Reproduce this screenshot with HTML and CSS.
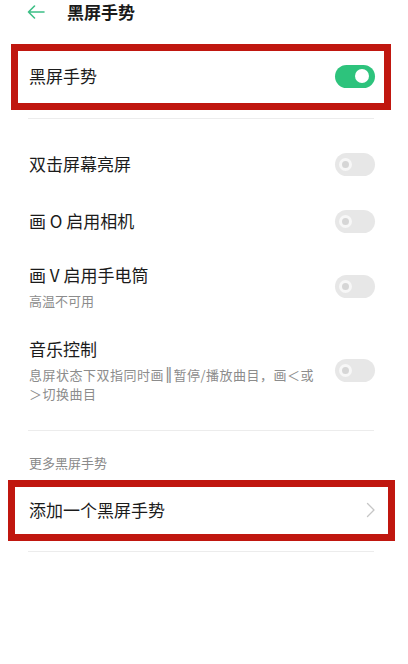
FILE: index.html
```html
<!DOCTYPE html>
<html lang="zh-CN">
<head>
<meta charset="utf-8">
<link rel="stylesheet" href="styles.css">
</head>
<body>
<div class="page">
  <header class="topbar">
    <svg class="back" width="18" height="14" viewBox="0 0 18 14">
      <path d="M17 7H1.5M7.5 1L1.5 7l6 6" fill="none" stroke="#3dbf86" stroke-width="1.6" stroke-linecap="round" stroke-linejoin="round"/>
    </svg>
    <h1 class="title">黑屏手势</h1>
  </header>

  <div class="hl hl-main">
    <div class="main-row">
      <span class="row-title">黑屏手势</span>
      <span class="toggle on"><span class="knob"></span></span>
    </div>
  </div>
  <div class="divider first"></div>

  <div class="rows">
    <div class="row">
      <div class="text"><div class="row-title">双击屏幕亮屏</div></div>
      <span class="toggle off"><span class="knob"></span></span>
    </div>
    <div class="row">
      <div class="text"><div class="row-title">画 O 启用相机</div></div>
      <span class="toggle off"><span class="knob"></span></span>
    </div>
    <div class="row">
      <div class="text">
        <div class="row-title">画 V 启用手电筒</div>
        <div class="row-sub">高温不可用</div>
      </div>
      <span class="toggle off"><span class="knob"></span></span>
    </div>
    <div class="row">
      <div class="text">
        <div class="row-title">音乐控制</div>
        <div class="row-sub wide">息屏状态下双指同时画<span class="bars">‖</span>暂停/播放曲目，画＜或＞切换曲目</div>
      </div>
      <span class="toggle off"><span class="knob"></span></span>
    </div>
  </div>
  <div class="divider"></div>

  <div class="section-head">更多黑屏手势</div>
  <div class="hl hl-add">
    <div class="add-row">
      <span class="row-title">添加一个黑屏手势</span>
      <svg class="chev" width="10" height="16" viewBox="0 0 10 16">
        <path d="M1.5 1.5L8 8l-6.5 6.5" fill="none" stroke="#c6c6c6" stroke-width="1.3" stroke-linecap="round" stroke-linejoin="round"/>
      </svg>
    </div>
  </div>
  <div class="divider last"></div>
</div>
</body>
</html>
```

FILE: styles.css
```css
html, body {
  margin: 0;
  padding: 0;
  background: #ffffff;
}
body {
  font-family: "Noto Sans CJK SC", "Noto Sans", sans-serif;
  color: #1b1b1b;
  width: 408px;
  height: 664px;
  overflow: hidden;
}
.page {
  display: flex;
  flex-direction: column;
}
.topbar {
  height: 24px;
  display: flex;
  align-items: center;
  padding-left: 27px;
}
.back {
  display: block;
  margin-top: -1px;
}
.title {
  margin: -1px 0 0 22px;
  font-size: 17px;
  font-weight: 700;
  line-height: 24px;
  color: #1a1a1a;
}
.hl {
  border: 7px solid #c0170f;
  background: #fff;
}
.hl-main {
  margin: 20px 17px 0 11px;
  height: 52px;
}
.main-row {
  height: 100%;
  display: flex;
  align-items: center;
  justify-content: space-between;
  padding: 0 9px 2px 11px;
  box-sizing: border-box;
}
.row-title {
  font-size: 17px;
  line-height: 24px;
  color: #1b1b1b;
}
.divider {
  height: 1px;
  background: #ececec;
  margin: 8px 34px 0 28px;
}
.rows {
  margin-top: 16px;
  padding: 0 33px 0 29px;
}
.row {
  display: flex;
  align-items: center;
  min-height: 57px;
  box-sizing: border-box;
  padding: 14px 0 13px;
}
.text {
  flex: 1;
  margin-right: 20px;
}
.row-sub {
  margin-top: 4px;
  font-size: 13px;
  line-height: 19px;
  color: #8c8c8c;
}
.row-sub.wide {
  letter-spacing: 0.5px;
}
.bars {
  font-family: "DejaVu Sans", sans-serif;
  font-size: 15px;
  display: inline-block;
  vertical-align: top;
  height: 19px;
  line-height: 19px;
  letter-spacing: 0;
  margin: 0 1px;
}
.divider + .section-head {
  margin-top: 22px;
}
.rows + .divider {
  margin-top: 14px;
}
.section-head {
  padding-left: 29px;
  font-size: 13px;
  line-height: 19px;
  color: #8a8a8a;
}
.hl-add {
  margin: 8px 13px 0 8px;
  height: 47px;
}
.add-row {
  height: 100%;
  display: flex;
  align-items: center;
  justify-content: space-between;
  padding: 0 12px 2px 14px;
  box-sizing: border-box;
}
.chev {
  display: block;
}
.divider.last {
  margin-top: 10px;
}
.toggle {
  flex: none;
  width: 40px;
  height: 23px;
  border-radius: 12px;
  display: flex;
  align-items: center;
  box-sizing: border-box;
}
.toggle.on {
  background: #2dc37c;
  justify-content: flex-end;
  padding-right: 6px;
}
.toggle.on .knob {
  width: 14px;
  height: 14px;
  border-radius: 50%;
  background: #ffffff;
}
.toggle.off {
  background: #e7e7e7;
  padding-left: 4px;
}
.toggle.off .knob {
  width: 13px;
  height: 13px;
  border-radius: 50%;
  box-sizing: border-box;
  border: 3px solid #f7f7f7;
  background: #d6d6d6;
}
```
